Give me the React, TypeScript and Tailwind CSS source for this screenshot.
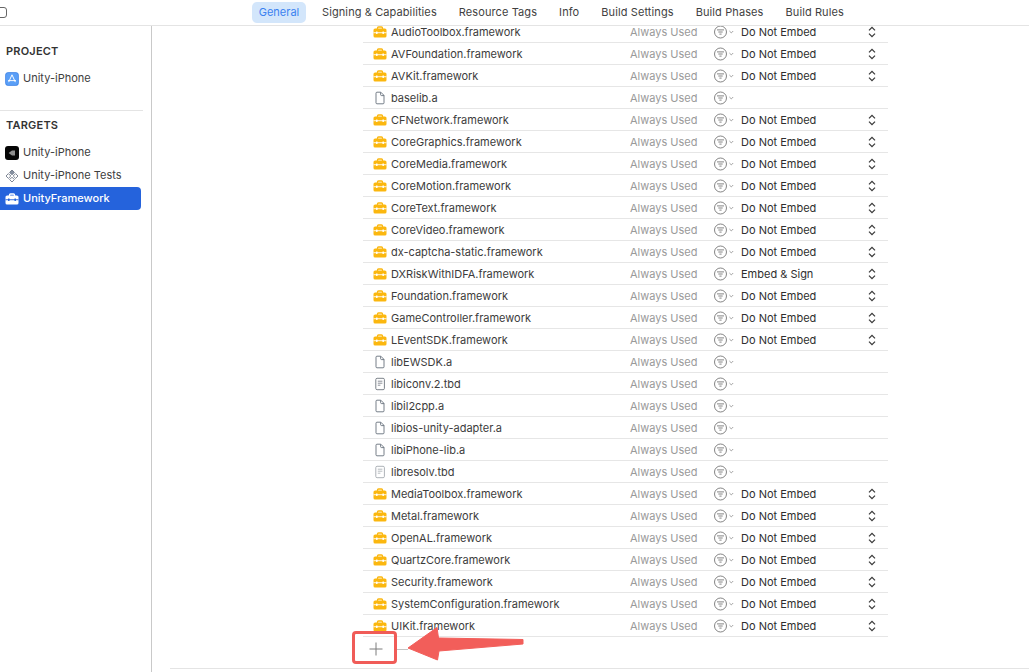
import React from "react";

type Kind = "fw" | "a" | "tbd" | "tbd2";
const rows: [string, Kind, string?][] = [
  ["AudioToolbox.framework", "fw", "Do Not Embed"],
  ["AVFoundation.framework", "fw", "Do Not Embed"],
  ["AVKit.framework", "fw", "Do Not Embed"],
  ["baselib.a", "a"],
  ["CFNetwork.framework", "fw", "Do Not Embed"],
  ["CoreGraphics.framework", "fw", "Do Not Embed"],
  ["CoreMedia.framework", "fw", "Do Not Embed"],
  ["CoreMotion.framework", "fw", "Do Not Embed"],
  ["CoreText.framework", "fw", "Do Not Embed"],
  ["CoreVideo.framework", "fw", "Do Not Embed"],
  ["dx-captcha-static.framework", "fw", "Do Not Embed"],
  ["DXRiskWithIDFA.framework", "fw", "Embed & Sign"],
  ["Foundation.framework", "fw", "Do Not Embed"],
  ["GameController.framework", "fw", "Do Not Embed"],
  ["LEventSDK.framework", "fw", "Do Not Embed"],
  ["libEWSDK.a", "a"],
  ["libiconv.2.tbd", "tbd"],
  ["libil2cpp.a", "a"],
  ["libios-unity-adapter.a", "a"],
  ["libiPhone-lib.a", "a"],
  ["libresolv.tbd", "tbd2"],
  ["MediaToolbox.framework", "fw", "Do Not Embed"],
  ["Metal.framework", "fw", "Do Not Embed"],
  ["OpenAL.framework", "fw", "Do Not Embed"],
  ["QuartzCore.framework", "fw", "Do Not Embed"],
  ["Security.framework", "fw", "Do Not Embed"],
  ["SystemConfiguration.framework", "fw", "Do Not Embed"],
  ["UIKit.framework", "fw", "Do Not Embed"],
];

function Toolbox({ color = "#fbb70f", cut = "#ffffff" }: { color?: string; cut?: string }) {
  return (
    <svg width="14" height="12" viewBox="0 0 14 12" className="shrink-0">
      <path d="M4.5 3V2a1 1 0 0 1 1-1h3a1 1 0 0 1 1 1v1" fill="none" stroke={color} strokeWidth="1.3" />
      <rect x="0.5" y="2.5" width="13" height="9" rx="1.6" fill={color} />
      <rect x="0.5" y="6.3" width="13" height="0.9" fill={cut} />
      <rect x="3" y="5.4" width="1.6" height="2.6" rx="0.4" fill={cut} />
      <rect x="9.4" y="5.4" width="1.6" height="2.6" rx="0.4" fill={cut} />
    </svg>
  );
}

function FileIcon({ kind }: { kind: Kind }) {
  if (kind === "a") {
    return (
      <svg width="14" height="14" viewBox="0 0 14 14" className="shrink-0">
        <path d="M3 2.2a1 1 0 0 1 1-1h3.8L11 4.4v7.4a1 1 0 0 1-1 1H4a1 1 0 0 1-1-1z M7.6 1.4v2.2a1 1 0 0 0 1 1H11" fill="none" stroke="#66707c" strokeWidth="0.9" />
      </svg>
    );
  }
  const c = kind === "tbd" ? "#6d747d" : "#a4a9af";
  return (
    <svg width="14" height="14" viewBox="0 0 14 14" className="shrink-0">
      <rect x="2.8" y="1.3" width="8.6" height="11.4" rx="1.3" fill="none" stroke={c} strokeWidth="0.9" />
      <path d="M4.8 4.2h4.6M4.8 6.2h4.6M4.8 8.2h2.6" stroke={c} strokeWidth="0.8" fill="none" />
    </svg>
  );
}

function FilterMenu() {
  return (
    <svg width="21" height="14" viewBox="0 0 21 14" className="shrink-0">
      <circle cx="6.5" cy="7" r="6" fill="none" stroke="#767676" strokeWidth="0.9" />
      <path d="M3 4.9h7M4.3 7h4.4M5.4 9.1h2.2" stroke="#767676" strokeWidth="0.9" fill="none" />
      <path d="M15.4 6l1.9 1.9L19.2 6" stroke="#8a8a8a" strokeWidth="0.8" fill="none" />
    </svg>
  );
}

function UpDown() {
  return (
    <svg width="8" height="12" viewBox="0 0 8 12">
      <path d="M1 4.4L4 1.4l3 3M1 7.6l3 3 3-3" fill="none" stroke="#3a3a3a" strokeWidth="1.3" />
    </svg>
  );
}

function Row({ name, kind, embed }: { name: string; kind: Kind; embed?: string }) {
  return (
    <div className="flex h-[22px] shrink-0 items-center border-b border-[#e6e6e6] pl-[8px] pt-[1px]">
      <div className="flex w-[20px] justify-center pr-[2px]">
        {kind === "fw" ? <Toolbox /> : <FileIcon kind={kind} />}
      </div>
      <span className="w-[239px] text-[#3c3c3c]">{name}</span>
      <span className="w-[84px] text-[#9a9a9a]">Always Used</span>
      <FilterMenu />
      {embed && <span className="ml-[6px] w-[127px] text-[#2e2e2e]">{embed}</span>}
      {embed && <UpDown />}
    </div>
  );
}

function SideItem({ icon, label, active }: { icon: React.ReactNode; label: string; active?: boolean }) {
  return (
    <div className={`flex h-[23px] w-[141px] items-center gap-[4px] rounded-r-[4px] pl-[5px] ${active ? "bg-[#2563dc] font-medium text-white" : "text-[#404040]"}`}>
      <span className="flex w-[14px] justify-center">{icon}</span>
      <span>{label}</span>
    </div>
  );
}

const tabs = ["Signing & Capabilities", "Resource Tags", "Info", "Build Settings", "Build Phases", "Build Rules"];

export default function App() {
  return (
    <div className="flex h-[672px] w-[1029px] flex-col overflow-hidden bg-white text-[11px] [font-family:Inter,'Liberation_Sans',sans-serif]">
      <header className="relative flex h-[26px] shrink-0 items-center border-b border-[#e4e4e4] bg-white">
        <div className="absolute left-[-6px] top-[7px] h-[11px] w-[13px] rounded-[3px] border border-[#666]" />
        <nav className="ml-[252px] flex items-center text-[#3f3f3f]">
          <span className="flex h-[21px] w-[54px] items-center justify-center rounded-[5px] bg-[#d3e6fb] text-[#3b82f0]">General</span>
          <div className="ml-[16px] flex gap-[22px] tracking-[0.1px]">
            {tabs.map((t) => (
              <span key={t}>{t}</span>
            ))}
          </div>
        </nav>
      </header>
      <div className="relative flex min-h-0 flex-1">
        <aside className="flex w-[152px] shrink-0 flex-col border-r border-[#c9c9c9] pt-[18px]">
          <div className="pl-[6px] font-semibold leading-[14px] tracking-[0.2px] text-[#333]">PROJECT</div>
          <div className="mt-[9px]">
            <SideItem
              label="Unity-iPhone"
              icon={
                <svg width="14" height="14" viewBox="0 0 13 13">
                  <rect x="0.5" y="0.5" width="12" height="12" rx="2.4" fill="#5a9ff7" stroke="#2f76e0" strokeWidth="0.6" />
                  <path d="M6.5 2.6L3.4 9.4M6.5 2.6l3.1 6.8M2.8 8h7.4" stroke="#fff" strokeWidth="0.9" fill="none" />
                </svg>
              }
            />
          </div>
          <div className="mt-[20px] h-px w-[143px] bg-[#e4e4e4]" />
          <div className="mt-[7px] pl-[6px] font-semibold leading-[14px] tracking-[0.2px] text-[#333]">TARGETS</div>
          <div className="mt-[9px] flex flex-col">
            <SideItem
              label="Unity-iPhone"
              icon={
                <svg width="14" height="14" viewBox="0 0 14 14">
                  <rect width="14" height="14" rx="3" fill="#050505" />
                  <path d="M3.6 7L7 4.6l3 0v4.8l-3 0z" fill="#8d8d8d" />
                </svg>
              }
            />
            <SideItem
              label="Unity-iPhone Tests"
              icon={
                <svg width="14" height="14" viewBox="0 0 14 14" fill="none" stroke="#70798a" strokeWidth="0.9">
                  <path d="M7 1l2.4 2.4L7 5.8 4.6 3.4z" fill="#8792a2" />
                  <path d="M3.4 4.6L5.8 7 3.4 9.4 1 7z" />
                  <path d="M10.6 4.6L13 7l-2.4 2.4L8.2 7z" />
                  <path d="M7 8.2l2.4 2.4L7 13l-2.4-2.4z" />
                </svg>
              }
            />
            <SideItem active label="UnityFramework" icon={<Toolbox color="#ffffff" cut="#2563dc" />} />
          </div>
        </aside>
        <main className="min-w-0 flex-1 overflow-hidden">
          <div className="-mt-[5px] ml-[211px] flex w-[525px] flex-col">
            {rows.map(([n, k, e]) => (
              <Row key={n} name={n} kind={k} embed={e} />
            ))}
            <div className="flex h-[24px] items-center">
              <svg width="16" height="16" viewBox="0 0 16 16" className="ml-[5px]">
                <path d="M8 1.5v13M1.5 8h13" stroke="#7d7d7d" strokeWidth="1" fill="none" />
              </svg>
              <span className="ml-[13px] h-px w-[11px] bg-[#c4c4c4]" />
            </div>
          </div>
          <div className="ml-[18px] mt-[7px] h-px bg-[#e4e4e4]" />
        </main>
        {/* annotation over the screenshot */}
        <div className="absolute left-[352px] top-[605px] h-[33px] w-[45px] rounded-[4px] border-[3px] border-[#f05c58]" />
        <svg width="120" height="36" viewBox="0 0 120 36" className="absolute left-[406px] top-[600px]">
          <path d="M2 22L31 1.5l1.5 10.5L117 13.5v4.5L33 25l-1.5 9z" fill="#f25e5a" stroke="#f25e5a" strokeWidth="1" strokeLinejoin="round" />
        </svg>
      </div>
    </div>
  );
}
